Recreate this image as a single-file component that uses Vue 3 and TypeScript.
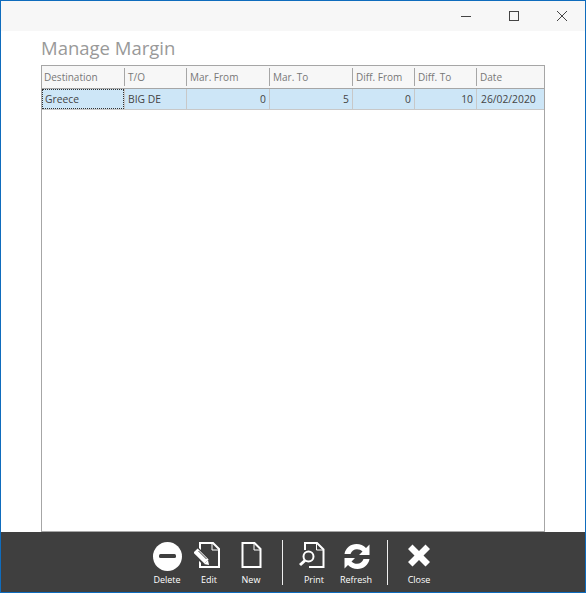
<template>
  <div class="window">
    <div class="title-bar">
      <button class="win-btn" aria-label="Minimize">
        <svg width="12" height="12" viewBox="0 0 12 12"><path d="M1 6.5h10" stroke="#444" fill="none" /></svg>
      </button>
      <button class="win-btn" aria-label="Maximize">
        <svg width="12" height="12" viewBox="0 0 12 12"><rect x="1.5" y="1.5" width="9" height="9" stroke="#444" fill="none" /></svg>
      </button>
      <button class="win-btn" aria-label="Close">
        <svg width="12" height="12" viewBox="0 0 12 12"><path d="M1 1l10 10M11 1L1 11" stroke="#444" fill="none" /></svg>
      </button>
    </div>

    <main class="content">
      <h1 class="heading">Manage Margin</h1>
      <div class="grid">
        <div class="grid-row head">
          <div v-for="col in columns" :key="col.key" class="head-cell">{{ col.label }}</div>
        </div>
        <div v-for="row in rows" :key="row.destination" class="grid-row data">
          <div
            v-for="(col, i) in columns"
            :key="col.key"
            class="data-cell"
            :class="{ num: col.num, focused: i === 0 }"
          >
            {{ row[col.key] }}
          </div>
        </div>
      </div>
    </main>

    <footer class="toolbar">
      <button class="tool">
        <svg width="30" height="30" viewBox="0 0 30 30">
          <circle cx="15.5" cy="15.5" r="14.5" fill="#fff" />
          <rect x="7" y="13" width="17" height="4" rx="1.5" fill="#3f3f3f" />
        </svg>
        <span>Delete</span>
      </button>
      <button class="tool">
        <svg width="30" height="30" viewBox="0 0 30 30">
          <path d="M6 2h13l6 6v18H6z" fill="none" stroke="#fff" stroke-width="2" />
          <path d="M18 2v7h7" fill="none" stroke="#fff" stroke-width="1" />
          <path d="M1.500 10L13 21.500" stroke="#3f3f3f" stroke-width="9" fill="none" />
          <path d="M1.500 9.500L12.500 20.500" stroke="#fff" stroke-width="6" fill="none" />
          <path d="M4.500 10L12.500 18" stroke="#3f3f3f" stroke-width="1" fill="none" />
          <path d="M10 23l5 1-1-5z" fill="#fff" />
        </svg>
        <span>Edit</span>
      </button>
      <button class="tool">
        <svg width="30" height="30" viewBox="0 0 30 30">
          <path d="M6.500 2h12l6 6v18h-18z" fill="none" stroke="#fff" stroke-width="2" />
          <path d="M18 2v7h6.500" fill="none" stroke="#fff" stroke-width="1" />
        </svg>
        <span>New</span>
      </button>
      <i class="sep"></i>
      <button class="tool">
        <svg width="30" height="30" viewBox="0 0 30 30">
          <path d="M6 9V2h12l6.500 6.500V26H10" fill="none" stroke="#fff" stroke-width="2" />
          <path d="M17.500 2v7h7" fill="none" stroke="#fff" stroke-width="1" />
          <circle cx="9.500" cy="15.500" r="5" fill="none" stroke="#fff" stroke-width="2" />
          <path d="M6 19.500L1 24" stroke="#fff" stroke-width="3" fill="none" />
        </svg>
        <span>Print</span>
      </button>
      <button class="tool">
        <svg width="30" height="30" viewBox="0 0 30 30">
          <g transform="translate(0 1)">
            <path d="M3.500 12C4.500 6 9.500 2 15.500 2c3.800 0 7 1.500 9.500 4l3.500-3.500V13H18l3.500-3.500c-1.500-1.500-3.500-2.300-5.500-2.300-3 0-5.500 2-6.500 4.800z" fill="#fff" />
            <path d="M3.500 12C4.500 6 9.500 2 15.500 2c3.800 0 7 1.500 9.500 4l3.500-3.500V13H18l3.500-3.500c-1.500-1.500-3.500-2.300-5.500-2.300-3 0-5.500 2-6.500 4.800z" fill="#fff" transform="rotate(180 16 14.500)" />
          </g>
        </svg>
        <span>Refresh</span>
      </button>
      <i class="sep"></i>
      <button class="tool">
        <svg width="30" height="30" viewBox="0 0 30 30">
          <path d="M4 8l4.500-4.500L15 10l6.500-6.500L26 8l-6.500 6.500L26 21l-4.500 4.500L15 19l-6.500 6.500L4 21l6.500-6.500z" fill="#fff" />
        </svg>
        <span>Close</span>
      </button>
    </footer>
  </div>
</template>

<script setup lang="ts">
interface Column {
  key: 'destination' | 'to' | 'marFrom' | 'marTo' | 'diffFrom' | 'diffTo' | 'date'
  label: string
  num?: boolean
}

const columns: Column[] = [
  { key: 'destination', label: 'Destination' },
  { key: 'to', label: 'T/O' },
  { key: 'marFrom', label: 'Mar. From', num: true },
  { key: 'marTo', label: 'Mar. To', num: true },
  { key: 'diffFrom', label: 'Diff. From', num: true },
  { key: 'diffTo', label: 'Diff. To', num: true },
  { key: 'date', label: 'Date' }
]

const rows = [
  { destination: 'Greece', to: 'BIG DE', marFrom: '0', marTo: '5', diffFrom: '0', diffTo: '10', date: '26/02/2020' }
]
</script>

<style scoped>
.window {
  box-sizing: border-box;
  width: 586px;
  height: 593px;
  border: 1px solid #0f6cbd;
  display: flex;
  flex-direction: column;
  background: #fff;
  font-family: 'Open Sans', 'Noto Sans', sans-serif;
}

.title-bar {
  height: 30px;
  flex-shrink: 0;
  background: #f7f7f7;
  display: flex;
  justify-content: flex-end;
  gap: 2px;
}

.win-btn {
  width: 46px;
  height: 30px;
  padding: 0;
  border: 0;
  background: none;
  display: flex;
  align-items: center;
  justify-content: center;
}

.content {
  flex: 1;
  min-height: 0;
  padding: 5px 40px 0;
  display: flex;
  flex-direction: column;
}

.heading {
  margin: 0;
  height: 29px;
  font-size: 18.5px;
  font-weight: 400;
  line-height: 24px;
  color: #999;
}

.grid {
  flex: 1;
  min-height: 0;
  width: 504px;
  box-sizing: border-box;
  border: 1px solid #a6a6a6;
}

.grid-row {
  display: grid;
  grid-template-columns: 82px 62px 83px 83px 62px 62px 1fr;
  font-size: 10px;
}

.head {
  height: 23px;
  background: #f7f7f7;
  border-bottom: 1px solid #a6a6a6;
  box-sizing: border-box;
  align-items: center;
}

.head-cell {
  height: 18px;
  line-height: 18px;
  padding-left: 3px;
  color: #777;
  border-left: 1px solid #a6a6a6;
  white-space: nowrap;
  overflow: hidden;
}

.head-cell:first-child {
  border-left: 0;
  padding-left: 2px;
}

.data {
  height: 21px;
  background: #cde6f7;
  border-bottom: 1px solid #c8c8c8;
  box-sizing: border-box;
  font-size: 10.3px;
}

.data-cell {
  padding: 0 3px;
  line-height: 20px;
  color: #444;
  border-left: 1px solid #c8c8c8;
  white-space: nowrap;
  overflow: hidden;
}

.data-cell:last-child {
  padding-left: 4px;
}

.data-cell.num {
  text-align: right;
}

.data-cell.focused {
  border: 1px dotted #333;
  line-height: 18px;
  padding: 0 2px;
}

.toolbar {
  height: 60px;
  flex-shrink: 0;
  background: #3f3f3f;
  display: flex;
  justify-content: center;
  align-items: center;
}

.tool {
  width: 42px;
  height: 60px;
  padding: 9px 0 0;
  border: 0;
  background: none;
  color: #fff;
  font-family: inherit;
  font-size: 9px;
  display: flex;
  flex-direction: column;
  align-items: center;
  gap: 2px;
}

.sep {
  width: 1px;
  height: 45px;
  margin: 0 10px;
  background: #eee;
}
</style>
